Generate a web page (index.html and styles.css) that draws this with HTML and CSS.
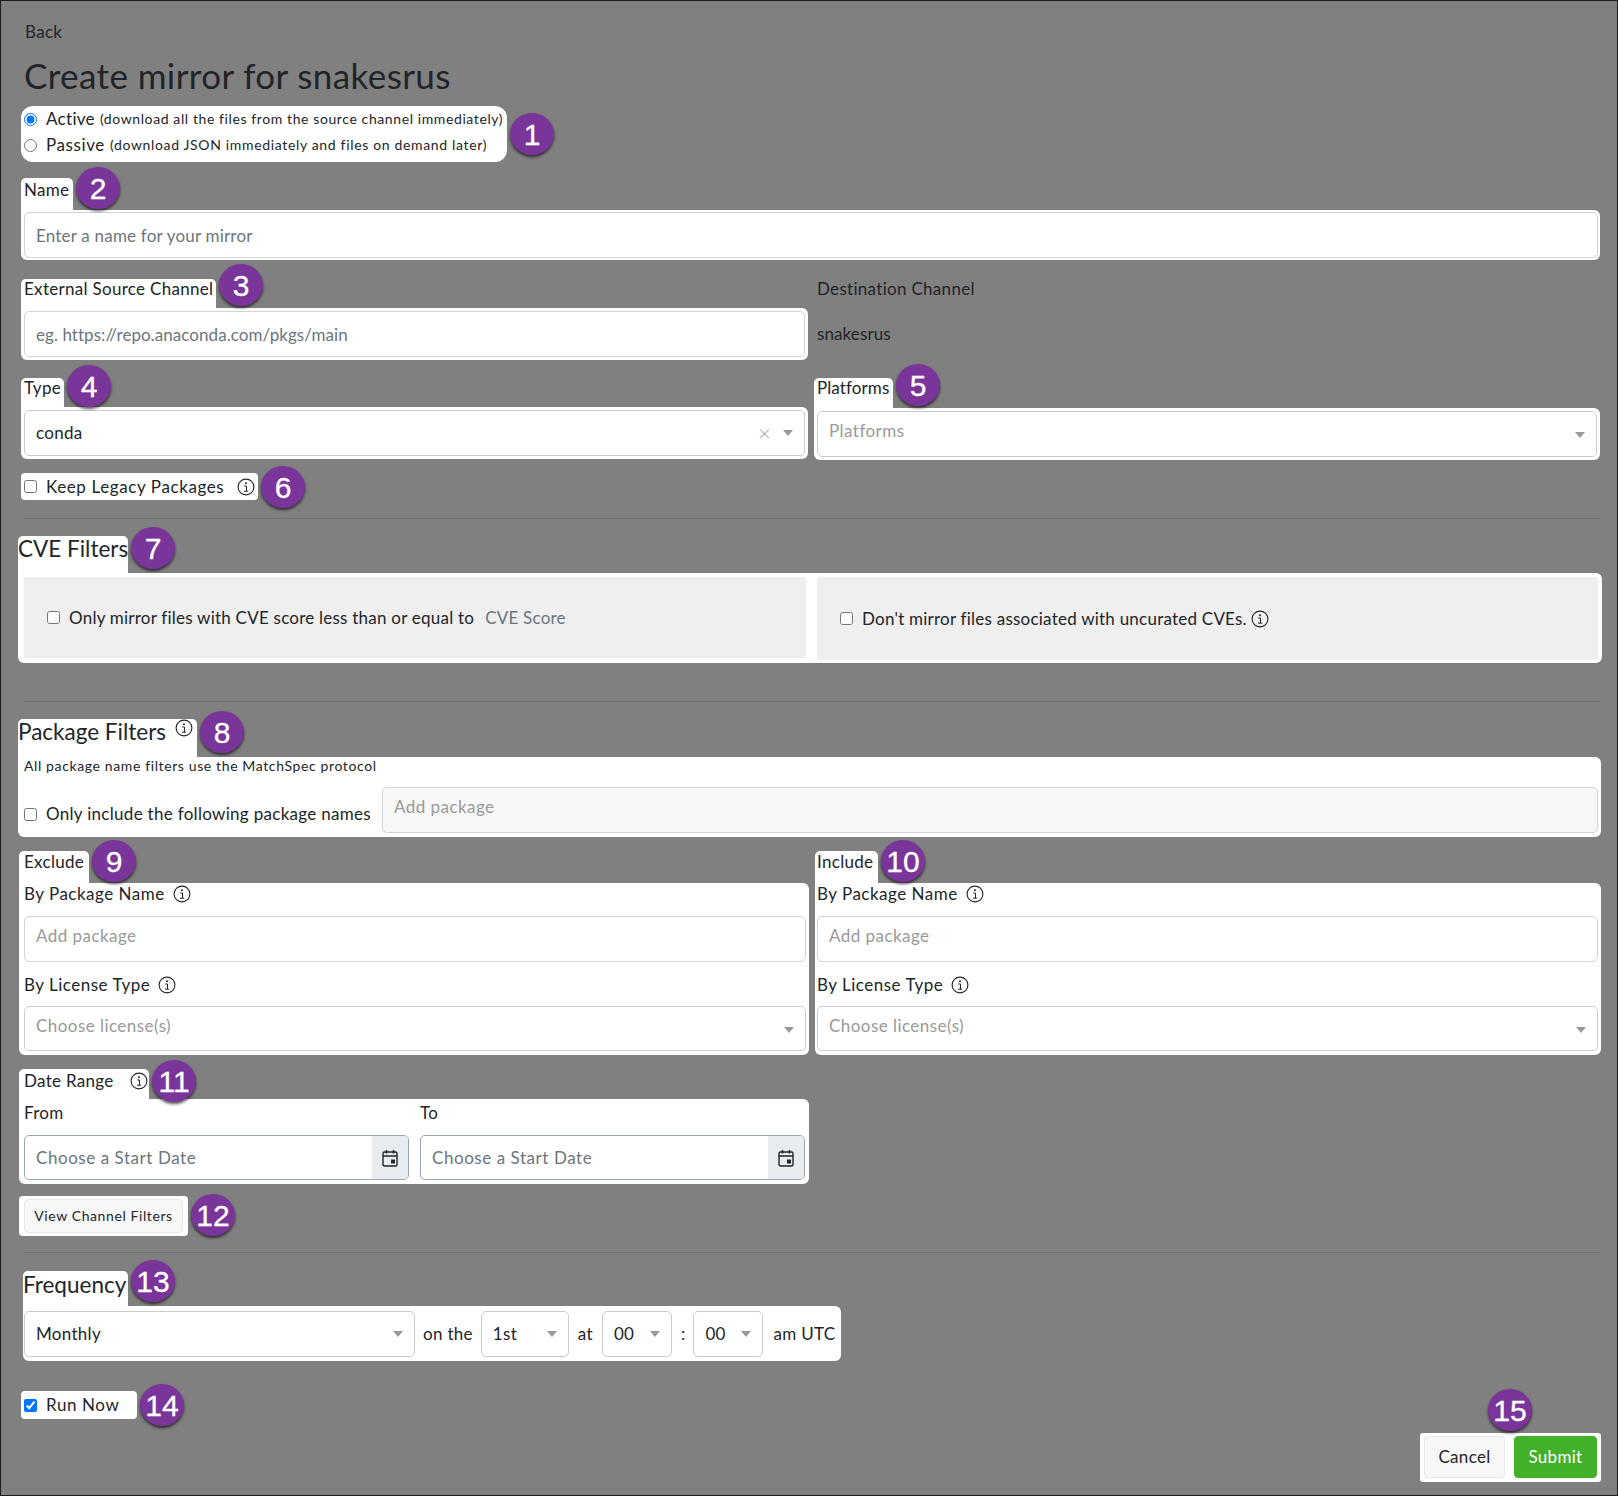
FILE: index.html
```html
<!DOCTYPE html>
<html lang="en">
<head>
<meta charset="utf-8">
<title>Create mirror for snakesrus</title>
<link rel="stylesheet" href="styles.css">
</head>
<body>
<svg class="defs" width="0" height="0" aria-hidden="true">
  <symbol id="info" viewBox="0 0 18 18">
    <circle cx="9" cy="9" r="7.9" fill="none" stroke="currentColor" stroke-width="1.1"/>
    <circle cx="9" cy="5.3" r="1" fill="currentColor"/>
    <path d="M7.2 8h2.3v5M7 13.2h4.2" fill="none" stroke="currentColor" stroke-width="1"/>
  </symbol>
  <symbol id="cal" viewBox="0 0 16 18">
    <rect x="1" y="3" width="14" height="14" rx="1.5" fill="none" stroke="currentColor" stroke-width="1.4"/>
    <path d="M1 7h14M4.5 1v3.5M11.5 1v3.5" fill="none" stroke="currentColor" stroke-width="1.5"/>
    <rect x="9" y="10.5" width="4" height="4" fill="currentColor"/>
  </symbol>
</svg>
<main class="page">
  <a class="back">Back</a>
  <h1 class="title">Create mirror for snakesrus</h1>

  <div class="modes">
    <label class="mode"><input type="radio" name="mode" checked><span class="mode-name">Active</span> <small>(download all the files from the source channel immediately)</small></label>
    <label class="mode mode-passive"><input type="radio" name="mode"><span class="mode-name">Passive</span> <small>(download JSON immediately and files on demand later)</small></label>
    <span class="badge badge-modes">1</span>
  </div>

  <section class="block block-name">
    <div class="tab tab-label">Name<span class="badge">2</span></div>
    <div class="panel panel-name"><div class="field ph-dark ph-name">Enter a name for your mirror</div></div>
  </section>

  <div class="cols cols-source">
    <section class="block">
      <div class="tab tab-source">External Source Channel<span class="badge">3</span></div>
      <div class="panel panel-tight"><div class="field ph-dark">eg. https://repo.anaconda.com/pkgs/main</div></div>
    </section>
    <section class="dest">
      <div class="dest-label">Destination Channel</div>
      <div class="dest-value">snakesrus</div>
    </section>
  </div>

  <div class="cols cols-type">
    <section class="block">
      <div class="tab tab-type">Type<span class="badge">4</span></div>
      <div class="panel panel-tight">
        <div class="field select"><span class="grow">conda</span><span class="clear">×</span><span class="caret"></span></div>
      </div>
    </section>
    <section class="block">
      <div class="tab tab-platforms">Platforms<span class="badge">5</span></div>
      <div class="panel panel-tight">
        <div class="field select field-top"><span class="grow ph-light">Platforms</span><span class="caret"></span></div>
      </div>
    </section>
  </div>

  <label class="keep"><input type="checkbox"><span class="keep-text">Keep Legacy Packages</span><svg class="info"><use href="#info"/></svg><span class="badge">6</span></label>

  <hr class="rule rule-a">

  <section class="wide wide-cve">
    <h2 class="tab tab-heading tab-cve">CVE Filters<span class="badge">7</span></h2>
    <div class="panel panel-cve">
      <div class="cve-box"><input type="checkbox"><span>Only mirror files with CVE score less than or equal to</span><span class="cve-score">CVE Score</span></div>
      <div class="cve-box cve-box-tall"><input type="checkbox"><span>Don't mirror files associated with uncurated CVEs.</span><svg class="info info-near"><use href="#info"/></svg></div>
    </div>
  </section>

  <hr class="rule rule-b">

  <section class="wide wide-pkg">
    <h2 class="tab tab-heading tab-pkg">Package Filters<svg class="info info-sup"><use href="#info"/></svg><span class="badge">8</span></h2>
    <div class="panel panel-pkg">
      <p class="pkg-note">All package name filters use the MatchSpec protocol</p>
      <div class="pkg-row">
        <label class="pkg-check"><input type="checkbox"><span>Only include the following package names</span></label>
        <div class="field field-muted field-top ph-light">Add package</div>
      </div>
    </div>
  </section>

  <div class="cols cols-filter">
    <section class="block">
      <div class="tab tab-filter tab-exclude">Exclude<span class="badge">9</span></div>
      <div class="panel panel-filter">
        <div class="sub-label">By Package Name<svg class="info info-gap"><use href="#info"/></svg></div>
        <div class="field field-top ph-light">Add package</div>
        <div class="sub-label sub-label-second">By License Type<svg class="info info-gap"><use href="#info"/></svg></div>
        <div class="field select field-top"><span class="grow ph-light">Choose license(s)</span><span class="caret"></span></div>
      </div>
    </section>
    <section class="block">
      <div class="tab tab-filter tab-include">Include<span class="badge">10</span></div>
      <div class="panel panel-filter panel-include">
        <div class="sub-label">By Package Name<svg class="info info-gap"><use href="#info"/></svg></div>
        <div class="field field-top ph-light">Add package</div>
        <div class="sub-label sub-label-second">By License Type<svg class="info info-gap"><use href="#info"/></svg></div>
        <div class="field select field-top"><span class="grow ph-light">Choose license(s)</span><span class="caret"></span></div>
      </div>
    </section>
  </div>

  <section class="date">
    <div class="tab tab-date">Date Range<svg class="info info-date"><use href="#info"/></svg><span class="badge">11</span></div>
    <div class="panel panel-date">
      <div>
        <div class="date-label">From</div>
        <div class="date-field"><span class="grow">Choose a Start Date</span><span class="addon"><svg class="cal"><use href="#cal"/></svg></span></div>
      </div>
      <div>
        <div class="date-label">To</div>
        <div class="date-field"><span class="grow">Choose a Start Date</span><span class="addon"><svg class="cal"><use href="#cal"/></svg></span></div>
      </div>
    </div>
  </section>

  <div class="view"><button class="btn btn-view" type="button">View Channel Filters</button><span class="badge">12</span></div>

  <hr class="rule rule-c">

  <section class="freq">
    <h2 class="tab tab-heading tab-freq">Frequency<span class="badge">13</span></h2>
    <div class="panel panel-freq">
      <div class="field select sel-month"><span class="grow">Monthly</span><span class="caret"></span></div>
      <span class="word word-on">on the</span>
      <div class="field select sel-day"><span class="grow">1st</span><span class="caret"></span></div>
      <span class="word word-at">at</span>
      <div class="field select sel-time"><span class="grow">00</span><span class="caret"></span></div>
      <span class="word word-colon">:</span>
      <div class="field select sel-time"><span class="grow">00</span><span class="caret"></span></div>
      <span class="word word-utc">am UTC</span>
    </div>
  </section>

  <label class="run"><input type="checkbox" checked><span class="keep-text">Run Now</span><span class="badge">14</span></label>

  <div class="actions">
    <span class="badge badge-actions">15</span>
    <button class="btn btn-cancel" type="button">Cancel</button>
    <button class="btn btn-submit" type="button">Submit</button>
  </div>
</main>
</body>
</html>
```

FILE: styles.css
```css
* { box-sizing: border-box; }
html, body { margin: 0; padding: 0; }
body { font-family: "Lato", "Liberation Sans", sans-serif; font-size: 17px; line-height: 24px; color: #212529; background: #808080; }
.defs { position: absolute; }
.page { width: 1618px; height: 1496px; border: 1px solid #1c1c1c; background: #808080; display: flex; flex-direction: column; overflow: hidden; letter-spacing: 0.3px; }

.badge { position: absolute; left: calc(100% + 3px); top: -11px; width: 44px; height: 42px; border-radius: 50%; background: #7a359a; color: #fff; font: 400 30px/44px "Liberation Sans", Arial, sans-serif; text-align: center; letter-spacing: 0; -webkit-text-stroke: 0.3px #fff; box-shadow: 0 2px 3px rgba(0, 0, 0, .65); z-index: 2; }

.back { margin: 19px 0 0 24px; height: 24px; color: #212529; }
.title { margin: 12px 0 0 23px; font-size: 35px; line-height: 38px; font-weight: 400; letter-spacing: 0.4px; }

.modes { position: relative; margin: 12px 0 0 20px; width: 486px; height: 56px; background: #fff; border-radius: 12px; padding: 0 3px; }
.mode { display: flex; align-items: center; height: 26px; white-space: nowrap; }
.mode input, .keep input, .run input, .pkg-check input { margin: 0 9px 0 0; flex: none; }
.mode-name { margin-right: 5px; }
.mode small { font-size: 14px; letter-spacing: 0.6px; }
.mode-passive .mode-name { margin-right: 5px; letter-spacing: 0.6px; }
.mode-passive small { letter-spacing: 0.66px; }
.badge-modes { top: 7px; }

.tab { position: relative; background: #fff; border-radius: 5px 5px 0 0; white-space: nowrap; }
.panel { background: #fff; border-radius: 0 6px 6px 6px; }
.panel-name { padding: 2px 2px 2px 3px; }
.panel-tight { padding: 3px; }

.block { min-width: 0; }
.block-name { margin: 16px 17px 0 20px; }
.tab-label { width: 52px; height: 32px; padding: 0 3px; }
.tab-source { width: 195px; height: 29px; padding: 0 3px; line-height: 20px; }
.tab-source .badge { top: -15px; }
.tab-type { width: 43px; height: 29px; padding: 0 3px; line-height: 20px; }
.tab-type .badge { top: -13px; }
.tab-platforms { width: 79px; height: 30px; padding: 0 3px; line-height: 20px; letter-spacing: 0.1px; }
.tab-platforms .badge { top: -14px; }
.tab-filter { height: 32px; padding: 0 5px; line-height: 22px; }
.tab-filter .badge { top: -11px; }
.tab-exclude { width: 70px; }
.tab-include { width: 63px; padding-left: 2px; }

.field { display: flex; align-items: center; height: 46px; padding: 0 11px; background: #fff; border: 1px solid #ced4da; border-radius: 5px; white-space: nowrap; }
.ph-dark { color: #6c757d; letter-spacing: 0.05px; padding-top: 1px; }
.ph-name { letter-spacing: 0.2px; }
.ph-light { color: #999; letter-spacing: 0.45px; }
.select { border: 1.5px solid #ccc; }
.field-top { align-items: flex-start; padding-top: 7px; }
.field-muted { background: #f8f8f8; }
.grow { flex: 1; min-width: 0; }
.caret { flex: none; width: 0; height: 0; border: 5.5px solid transparent; border-top: 6px solid #999; border-bottom: 0; }
.field-top .caret { margin-top: 13px; }
.clear { flex: none; margin-right: 12px; color: #999; font-size: 22px; font-weight: 300; }

.cols { display: grid; grid-template-columns: 787px 786px; column-gap: 6px; margin-left: 20px; }
.cols-source { margin-top: 19px; }
.cols-type { margin-top: 18px; }
.cols-filter { margin-top: 14px; margin-left: 18px; grid-template-columns: 790px 786px; }
.dest { padding-left: 3px; }
.dest-label { height: 20px; line-height: 20px; }
.dest-value { margin-top: 23px; letter-spacing: 0.1px; }

.keep { position: relative; display: flex; align-items: center; width: 237px; height: 27px; margin: 13px 0 0 20px; padding-left: 3px; background: #fff; border-radius: 4px; }
.keep-text { white-space: nowrap; letter-spacing: 0.6px; }
.info { width: 18px; height: 18px; flex: none; color: #212529; }
.keep .info { margin-left: 13px; }

.rule { height: 1px; margin: 0 16px 0 23px; border: 0; background: #727272; }
.rule-a { margin-top: 18px; }
.rule-b { margin-top: 38px; }
.rule-c { margin-top: 16px; }

.wide { margin: 17px 0 0 17px; width: 1584px; }
.wide-pkg { width: 1583px; }
.tab-heading { margin: 0; font-size: 22.5px; font-weight: 400; letter-spacing: 0; }
.tab-cve { height: 37px; width: 110px; line-height: 26px; }
.tab-cve .badge { top: -9px; }
.tab-pkg { height: 38px; width: 179px; line-height: 26px; }
.tab-pkg .badge { top: -8px; }
.panel-cve { display: grid; grid-template-columns: 782px 781px; column-gap: 11px; align-items: start; padding: 4px 0 3px 6px; }
.cve-box { display: flex; align-items: center; height: 81px; padding-left: 23px; background: #efefef; border-radius: 2px; white-space: nowrap; letter-spacing: 0.23px; }
.cve-box-tall { height: 83px; }
.cve-box input { margin: 0 9px 0 0; flex: none; }
.cve-score { margin-left: 11px; color: #6c757d; }
.info-near { margin-left: 4px; }
.info-sup { position: absolute; left: 157px; top: 0; }

.panel-pkg { height: 80px; padding: 0 3px 0 6px; }
.pkg-note { margin: 0; font-size: 14px; line-height: 18px; letter-spacing: 0.62px; }
.pkg-row { display: flex; align-items: flex-start; margin-top: 12px; }
.pkg-check { display: flex; align-items: center; height: 24px; margin-top: 15px; width: 358px; flex: none; white-space: nowrap; letter-spacing: 0.3px; }
.pkg-row .field { flex: 1; }

.panel-filter { height: 172px; padding: 0 3px 0 5px; }
.panel-include { padding-left: 2px; }
.sub-label { display: flex; align-items: center; height: 20px; padding-top: 1px; letter-spacing: 0.5px; }
.info-gap { margin-left: 8px; }
.panel-filter .field { margin-top: 13px; }
.panel-filter .field.select { height: 45px; margin-top: 12px; }
.sub-label-second { margin-top: 12px; }

.date { margin: 14px 0 0 18px; width: 790px; }
.tab-date { height: 30px; width: 130px; padding: 0 5px; }
.tab-date .badge { top: -9px; }
.info-date { position: absolute; left: 111px; top: 3px; }
.panel-date { display: grid; grid-template-columns: 385px 385px; column-gap: 11px; height: 85px; padding: 0 5px; }
.date-label { height: 36px; line-height: 28px; }
.date-field { display: flex; align-items: center; height: 45px; padding-left: 11px; border: 1px solid #9aa5b4; border-radius: 5px; color: #6c757d; overflow: hidden; white-space: nowrap; letter-spacing: 0.55px; }
.addon { display: flex; align-items: center; justify-content: center; width: 36px; height: 100%; background: #e9ecef; flex: none; }
.cal { width: 16px; height: 18px; color: #212529; }

.view { position: relative; margin: 12px 0 0 18px; width: 169px; height: 40px; padding: 3px 5px; background: #fff; border-radius: 4px; }
.view .badge { top: -2px; }
.btn { font: inherit; letter-spacing: inherit; color: #212529; background: #f7f7f7; border: 1px solid #e8e8e8; border-radius: 4px; padding: 0; }
.btn-view { display: block; width: 159px; height: 34px; font-size: 14px; line-height: 20px; letter-spacing: 0.6px; }

.freq { margin: 18px 0 0 22px; }
.tab-freq { height: 35px; width: 105px; line-height: 28px; }
.panel-freq { display: flex; align-items: center; width: 818px; height: 55px; padding: 0 1px; }
.sel-month { width: 391px; }
.sel-day { width: 88px; }
.sel-time { width: 70px; }
.word-on { margin: 0 8px; }
.word-at { margin: 0 9px; }
.word-colon { margin: 0 8px 0 9px; }
.word-utc { margin-left: 10px; white-space: nowrap; }

.run { position: relative; display: flex; align-items: center; width: 116px; height: 28px; margin: 30px 0 0 20px; padding-left: 3px; background: #fff; border-radius: 4px; }
.run .badge { top: -7px; }
.keep .badge { top: -7px; }

.actions { position: relative; display: flex; gap: 9px; align-self: flex-end; width: 181px; height: 49px; margin: 14px 16px 0 0; padding: 3px 4px; background: #fff; border-radius: 3px; }
.btn-cancel { width: 81px; height: 42px; }
.btn-submit { width: 83px; height: 42px; color: #fff; background: #43b02a; border-color: #43b02a; }
.badge-actions { left: 68px; top: -44px; }
```
